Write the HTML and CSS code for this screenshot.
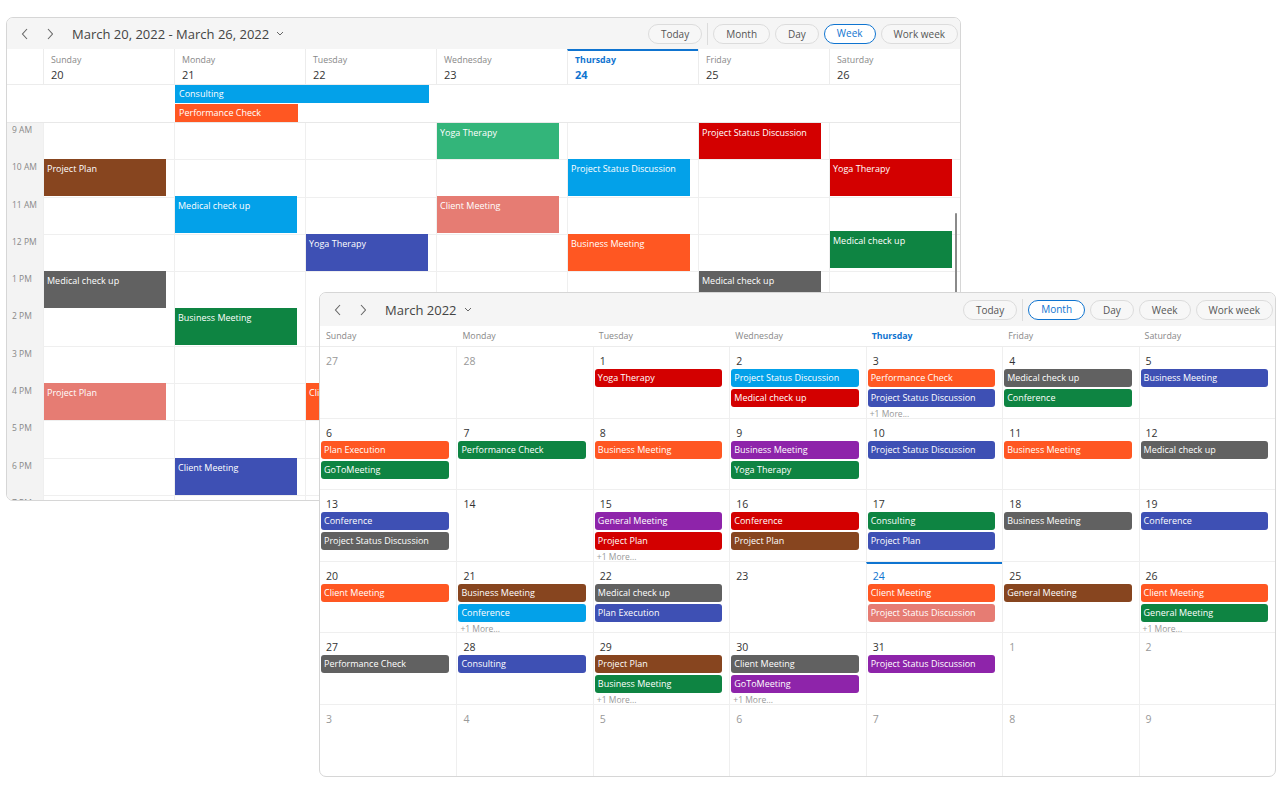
FILE: index.html
```html
<!DOCTYPE html>
<html>
<head>
<meta charset="utf-8">
<link rel="stylesheet" href="styles.css">
</head>
<body>
<section class="win week">
  <header class="toolbar">
    <span class="nav"><svg width="8" height="12" viewBox="0 0 8 12"><path d="M6 1 L1.5 6 L6 11" fill="none" stroke="#666" stroke-width="1.1"/></svg></span>
    <span class="nav"><svg width="8" height="12" viewBox="0 0 8 12"><path d="M2 1 L6.5 6 L2 11" fill="none" stroke="#666" stroke-width="1.1"/></svg></span>
    <span class="title">March 20, 2022 - March 26, 2022</span>
    <span class="caret"><svg width="8" height="5" viewBox="0 0 8 5"><path d="M1 1 L4 4 L7 1" fill="none" stroke="#666" stroke-width="1"/></svg></span>
    <div class="views">
      <span class="btn">Today</span>
      <span class="sep"></span>
      <span class="btn">Month</span>
      <span class="btn">Day</span>
      <span class="btn sel">Week</span>
      <span class="btn">Work week</span>
    </div>
  </header>
  <div class="wk-head">
    <div class="gut"></div>
    <div class="dh"><span class="dn">Sunday</span><span class="dd">20</span></div>
    <div class="dh"><span class="dn">Monday</span><span class="dd">21</span></div>
    <div class="dh"><span class="dn">Tuesday</span><span class="dd">22</span></div>
    <div class="dh"><span class="dn">Wednesday</span><span class="dd">23</span></div>
    <div class="dh today"><span class="dn">Thursday</span><span class="dd">24</span></div>
    <div class="dh"><span class="dn">Friday</span><span class="dd">25</span></div>
    <div class="dh"><span class="dn">Saturday</span><span class="dd">26</span></div>
  </div>
  <div class="wk-allday">
    <div class="ad c-sky ad-consult">Consulting</div>
    <div class="ad c-orange ad-perf">Performance Check</div>
  </div>
  <div class="wk-body">
    <div class="times">
      <span>9 AM</span><span>10 AM</span><span>11 AM</span><span>12 PM</span><span>1 PM</span><span>2 PM</span><span>3 PM</span><span>4 PM</span><span>5 PM</span><span>6 PM</span><span>7 PM</span>
    </div>
    <div class="col">
      <div class="ev c-brown" style="top:36px;height:37px">Project Plan</div>
      <div class="ev c-gray" style="top:148px;height:37px">Medical check up</div>
      <div class="ev c-salmon" style="top:260px;height:37px">Project Plan</div>
    </div>
    <div class="col">
      <div class="ev c-sky" style="top:73px;height:37px">Medical check up</div>
      <div class="ev c-green" style="top:185px;height:37px">Business Meeting</div>
      <div class="ev c-indigo" style="top:335px;height:37px">Client Meeting</div>
    </div>
    <div class="col">
      <div class="ev c-indigo" style="top:111px;height:37px">Yoga Therapy</div>
      <div class="ev c-orange" style="top:260px;height:37px">Client Meeting</div>
    </div>
    <div class="col">
      <div class="ev c-lgreen" style="top:0;height:36px">Yoga Therapy</div>
      <div class="ev c-salmon" style="top:73px;height:37px">Client Meeting</div>
    </div>
    <div class="col">
      <div class="ev c-sky" style="top:36px;height:37px">Project Status Discussion</div>
      <div class="ev c-orange" style="top:111px;height:37px">Business Meeting</div>
    </div>
    <div class="col">
      <div class="ev c-red" style="top:0;height:36px">Project Status Discussion</div>
      <div class="ev c-gray" style="top:148px;height:37px">Medical check up</div>
    </div>
    <div class="col">
      <div class="ev c-red" style="top:36px;height:37px">Yoga Therapy</div>
      <div class="ev c-green" style="top:108px;height:37px">Medical check up</div>
    </div>
    <div class="scroll"></div>
  </div>
</section>

<section class="win month">
  <header class="toolbar mt">
    <span class="nav"><svg width="8" height="12" viewBox="0 0 8 12"><path d="M6 1 L1.5 6 L6 11" fill="none" stroke="#666" stroke-width="1.1"/></svg></span>
    <span class="nav"><svg width="8" height="12" viewBox="0 0 8 12"><path d="M2 1 L6.5 6 L2 11" fill="none" stroke="#666" stroke-width="1.1"/></svg></span>
    <span class="title">March 2022</span>
    <span class="caret"><svg width="8" height="5" viewBox="0 0 8 5"><path d="M1 1 L4 4 L7 1" fill="none" stroke="#666" stroke-width="1"/></svg></span>
    <div class="views">
      <span class="btn">Today</span>
      <span class="sep"></span>
      <span class="btn sel">Month</span>
      <span class="btn">Day</span>
      <span class="btn">Week</span>
      <span class="btn">Work week</span>
    </div>
  </header>
  <div class="m-head">
    <span>Sunday</span><span>Monday</span><span>Tuesday</span><span>Wednesday</span><span class="today">Thursday</span><span>Friday</span><span>Saturday</span>
  </div>
  <div class="m-grid">
    <div class="cell out"><span class="num">27</span></div>
    <div class="cell out"><span class="num">28</span></div>
    <div class="cell"><span class="num">1</span><span class="me c-red">Yoga Therapy</span></div>
    <div class="cell"><span class="num">2</span><span class="me c-sky">Project Status Discussion</span><span class="me c-red">Medical check up</span></div>
    <div class="cell"><span class="num">3</span><span class="me c-orange">Performance Check</span><span class="me c-indigo">Project Status Discussion</span><span class="more">+1 More...</span></div>
    <div class="cell"><span class="num">4</span><span class="me c-gray">Medical check up</span><span class="me c-green">Conference</span></div>
    <div class="cell"><span class="num">5</span><span class="me c-indigo">Business Meeting</span></div>

    <div class="cell"><span class="num">6</span><span class="me c-orange">Plan Execution</span><span class="me c-green">GoToMeeting</span></div>
    <div class="cell"><span class="num">7</span><span class="me c-green">Performance Check</span></div>
    <div class="cell"><span class="num">8</span><span class="me c-orange">Business Meeting</span></div>
    <div class="cell"><span class="num">9</span><span class="me c-purple">Business Meeting</span><span class="me c-green">Yoga Therapy</span></div>
    <div class="cell"><span class="num">10</span><span class="me c-indigo">Project Status Discussion</span></div>
    <div class="cell"><span class="num">11</span><span class="me c-orange">Business Meeting</span></div>
    <div class="cell"><span class="num">12</span><span class="me c-gray">Medical check up</span></div>

    <div class="cell"><span class="num">13</span><span class="me c-indigo">Conference</span><span class="me c-gray">Project Status Discussion</span></div>
    <div class="cell"><span class="num">14</span></div>
    <div class="cell"><span class="num">15</span><span class="me c-purple">General Meeting</span><span class="me c-red">Project Plan</span><span class="more">+1 More...</span></div>
    <div class="cell"><span class="num">16</span><span class="me c-red">Conference</span><span class="me c-brown">Project Plan</span></div>
    <div class="cell"><span class="num">17</span><span class="me c-green">Consulting</span><span class="me c-indigo">Project Plan</span></div>
    <div class="cell"><span class="num">18</span><span class="me c-gray">Business Meeting</span></div>
    <div class="cell"><span class="num">19</span><span class="me c-indigo">Conference</span></div>

    <div class="cell"><span class="num">20</span><span class="me c-orange">Client Meeting</span></div>
    <div class="cell"><span class="num">21</span><span class="me c-brown">Business Meeting</span><span class="me c-sky">Conference</span><span class="more">+1 More...</span></div>
    <div class="cell"><span class="num">22</span><span class="me c-gray">Medical check up</span><span class="me c-indigo">Plan Execution</span></div>
    <div class="cell"><span class="num">23</span></div>
    <div class="cell today"><span class="num">24</span><span class="me c-orange">Client Meeting</span><span class="me c-salmon">Project Status Discussion</span></div>
    <div class="cell"><span class="num">25</span><span class="me c-brown">General Meeting</span></div>
    <div class="cell"><span class="num">26</span><span class="me c-orange">Client Meeting</span><span class="me c-green">General Meeting</span><span class="more">+1 More...</span></div>

    <div class="cell"><span class="num">27</span><span class="me c-gray">Performance Check</span></div>
    <div class="cell"><span class="num">28</span><span class="me c-indigo">Consulting</span></div>
    <div class="cell"><span class="num">29</span><span class="me c-brown">Project Plan</span><span class="me c-green">Business Meeting</span><span class="more">+1 More...</span></div>
    <div class="cell"><span class="num">30</span><span class="me c-gray">Client Meeting</span><span class="me c-purple">GoToMeeting</span><span class="more">+1 More...</span></div>
    <div class="cell"><span class="num">31</span><span class="me c-purple">Project Status Discussion</span></div>
    <div class="cell out"><span class="num">1</span></div>
    <div class="cell out"><span class="num">2</span></div>

    <div class="cell out"><span class="num">3</span></div>
    <div class="cell out"><span class="num">4</span></div>
    <div class="cell out"><span class="num">5</span></div>
    <div class="cell out"><span class="num">6</span></div>
    <div class="cell out"><span class="num">7</span></div>
    <div class="cell out"><span class="num">8</span></div>
    <div class="cell out"><span class="num">9</span></div>
  </div>
</section>
</body>
</html>
```

FILE: styles.css
```css
* { box-sizing: border-box; margin: 0; padding: 0; }
html, body { width: 1280px; height: 798px; }
body {
  margin: 0;
  background: #fff;
  font-family: "Open Sans", "Noto Sans", sans-serif;
  color: #333;
  position: relative;
  overflow: hidden;
}

/* windows */
.win {
  position: absolute;
  background: #fff;
  border: 1px solid #d6d6d6;
  border-radius: 7px;
  overflow: hidden;
  display: flex;
  flex-direction: column;
}
.week { left: 6px; top: 17px; width: 955px; height: 484px; }
.month { left: 319px; top: 292px; width: 957px; height: 485px; }

/* toolbar */
.toolbar {
  display: flex;
  align-items: center;
  height: 31px;
  flex: none;
  background: #f5f5f5;
  padding: 0 2px 0 14px;
}
.toolbar.mt { height: 33px; }
.nav { width: 25px; display: flex; align-items: center; justify-content: flex-start; }
.title { font-size: 13px; color: #444; margin-left: 1px; }
.caret { margin-left: 7px; display: flex; align-items: center; }
.views { margin-left: auto; display: flex; align-items: center; gap: 5px; }
.btn {
  height: 20px;
  line-height: 18px;
  padding: 0 12px;
  border: 1px solid #dcdcdc;
  border-radius: 10px;
  font-size: 10px;
  color: #555;
  background: #f7f7f7;
}
.btn.sel { border: 1.5px solid #0f74d0; color: #0f74d0; background: #fff; line-height: 17px; }
.sep { width: 1px; height: 22px; background: #dcdcdc; }

/* week header */
.wk-head {
  display: grid;
  grid-template-columns: 36px repeat(7, 1fr);
  height: 36px;
  flex: none;
  border-bottom: 1px solid #ececec;
}
.dh {
  display: flex;
  flex-direction: column;
  padding: 4px 0 0 7px;
  border-left: 1px solid #ececec;
}
.dn { font-size: 8.8px; color: #888; line-height: 14px; }
.dd { font-size: 11px; color: #333; line-height: 15px; }
.dh.today { border-top: 2px solid #0f74d0; padding-top: 2px; }
.dh.today .dn, .dh.today .dd { color: #0f74d0; font-weight: 700; }

/* all day */
.wk-allday {
  display: grid;
  grid-template-columns: 36px repeat(7, 1fr);
  grid-auto-rows: 18px;
  row-gap: 1px;
  padding-top: 0;
  height: 38px;
  flex: none;
  border-bottom: 1px solid #e8e8e8;
}
.ad {
  font-size: 9px;
  color: #fff;
  line-height: 18px;
  padding-left: 4px;
  margin-right: 7px;
  margin-left: 1px;
  white-space: nowrap;
  overflow: hidden;
}
.ad-consult { grid-column: 3 / span 2; grid-row: 1; }
.ad-perf { grid-column: 3; grid-row: 2; }

/* week body */
.wk-body {
  flex: 1;
  display: grid;
  grid-template-columns: 36px repeat(7, 1fr);
  overflow: hidden;
  position: relative;
}
.times {
  background: #f3f3f3;
  display: flex;
  flex-direction: column;
}
.times span {
  height: 37.3px;
  flex: none;
  font-size: 8.5px;
  color: #888;
  padding: 1px 0 0 5px;
  white-space: nowrap;
}
.col {
  position: relative;
  border-left: 1px solid #efefef;
  background: repeating-linear-gradient(to bottom, transparent 0, transparent 36.3px, #efefef 36.3px, #efefef 37.3px);
}
.ev {
  position: absolute;
  left: 0;
  right: 8px;
  font-size: 9px;
  color: #fff;
  padding: 4px 3px;
  line-height: 12px;
  white-space: nowrap;
  overflow: hidden;
}
.scroll {
  position: absolute;
  right: 3px;
  top: 90px;
  bottom: 0;
  width: 2px;
  background: #8a8a8a;
  border-radius: 1px;
}

/* month */
.m-head {
  display: grid;
  grid-template-columns: repeat(7, 1fr);
  height: 21px;
  flex: none;
  border-bottom: 1px solid #ececec;
}
.m-head span {
  font-size: 8.8px;
  color: #888;
  padding-left: 6px;
  line-height: 20px;
}
.m-head span.today { color: #0f74d0; font-weight: 700; }
.m-grid {
  flex: 1;
  min-height: 0;
  display: grid;
  grid-template-columns: repeat(7, minmax(0, 1fr));
  grid-template-rows: repeat(6, minmax(0, 1fr));
}
.cell {
  display: flex;
  flex-direction: column;
  padding: 0 7px 0 1px;
  border-left: 1px solid #efefef;
  border-bottom: 1px solid #efefef;
  overflow: hidden;
  min-height: 0;
}
.cell:nth-child(7n+1) { border-left: none; }
.cell:nth-last-child(-n+7) { border-bottom: none; }
.num {
  font-size: 10.5px;
  color: #333;
  line-height: 14px;
  padding: 7px 0 0 5px;
  height: 22px;
  flex: none;
}
.cell.out .num { color: #999; }
.cell.today { border-top: 2px solid #0f74d0; }
.cell.today .num { color: #0f74d0; padding-top: 5px; height: 20px; }
.me {
  flex: none;
  height: 18px;
  line-height: 18px;
  margin-bottom: 2px;
  border-radius: 3px;
  font-size: 9px;
  color: #fff;
  padding-left: 3px;
  white-space: nowrap;
  overflow: hidden;
}
.more {
  font-size: 8.5px;
  color: #999;
  line-height: 10px;
  padding-left: 2px;
  flex: none;
}

/* event colours */
.c-sky { background: #03a1e9; }
.c-orange { background: #ff5722; }
.c-red { background: #d30000; }
.c-indigo { background: #3e50b4; }
.c-gray { background: #616161; }
.c-green { background: #0e8442; }
.c-brown { background: #87451f; }
.c-salmon { background: #e67c73; }
.c-purple { background: #8e24aa; }
.c-lgreen { background: #33b57a; }
```
